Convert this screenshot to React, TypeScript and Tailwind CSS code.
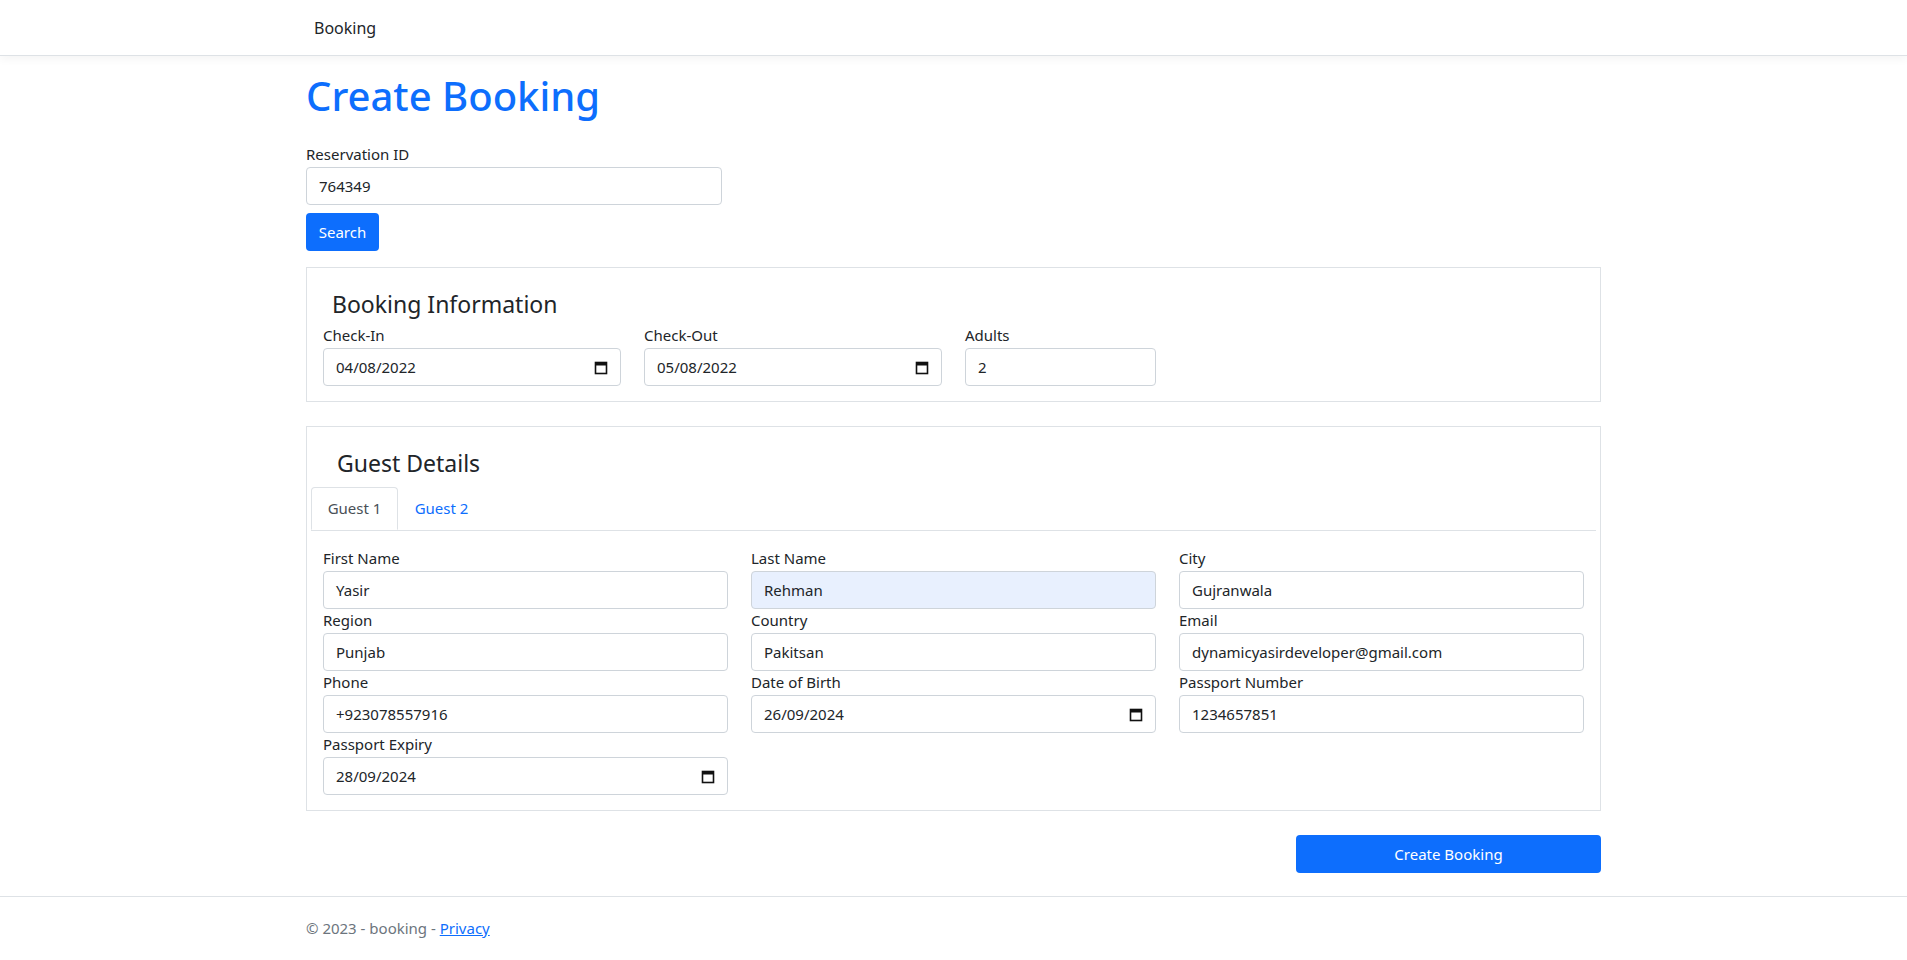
import React from "react";

const font = { fontFamily: '"Noto Sans", "Open Sans", sans-serif' };

function Cal() {
  return (
    <svg width="14" height="15" viewBox="0 0 14 15" className="shrink-0">
      <rect x="1.5" y="2.5" width="11" height="11" fill="none" stroke="#111" strokeWidth="1.6" />
      <rect x="1.5" y="2.5" width="11" height="3" fill="#111" />
    </svg>
  );
}

function Field({ label, value, date, hl, w }: { label: string; value: string; date?: boolean; hl?: boolean; w?: string }) {
  return (
    <div className={w}>
      <div className="text-[15px] text-[#212529] leading-[22px] mb-[2px]">{label}</div>
      <div className={`h-[38px] border border-[#ced4da] rounded-[4px] flex items-center justify-between px-[12px] text-[15px] text-[#212529] ${hl ? "bg-[#e8f0fe]" : "bg-white"}`}>
        <span>{value}</span>
        {date && <Cal />}
      </div>
    </div>
  );
}

export default function App() {
  return (
    <div style={font} className="min-h-[960px] bg-white text-[#212529]">
      <nav className="h-[56px] border-b border-[#dee2e6] shadow-[0_4px_8px_rgba(0,0,0,0.04)] flex items-center">
        <div className="w-[1295px] mx-auto pl-[8px] text-[16px]">Booking</div>
      </nav>
      <main className="w-[1295px] mx-auto">
        <h1 className="text-[40px] font-medium text-[#0d6efd] leading-[48px] mt-[72px-48px] pt-[16px]">Create Booking</h1>
        <div className="mt-[23px] text-[15px] leading-[22px]">Reservation ID</div>
        <div className="w-[416px] h-[38px] mt-[2px] border border-[#ced4da] rounded-[4px] flex items-center px-[12px] text-[15px]">764349</div>
        <button className="mt-[8px] h-[38px] w-[73px] bg-[#0d6efd] text-white text-[15px] rounded-[4px]">Search</button>

        <section className="mt-[16px] border border-[#dee2e6] px-[16px] pb-[15px] pt-[20px]">
          <h4 className="text-[23px] leading-[32px] pl-[9px]">Booking Information</h4>
          <div className="flex gap-[23px] mt-[4px]">
            <Field w="w-[298px]" label="Check-In" value="04/08/2022" date />
            <Field w="w-[298px]" label="Check-Out" value="05/08/2022" date />
            <Field w="w-[191px]" label="Adults" value="2" />
          </div>
        </section>

        <section className="mt-[24px] border border-[#dee2e6] px-[4px] pb-[15px] pt-[20px]">
          <h4 className="text-[23px] leading-[32px] pl-[26px]">Guest Details</h4>
          <div className="flex border-b border-[#dee2e6] mt-[8px] text-[15px]">
            <div className="h-[43px] w-[87px] flex items-center justify-center border border-[#dee2e6] border-b-white -mb-px rounded-t-[4px] text-[#495057]">Guest 1</div>
            <div className="h-[43px] w-[87px] flex items-center justify-center text-[#0d6efd]">Guest 2</div>
          </div>
          <div className="grid grid-cols-[405px_405px_405px] gap-x-[23px] px-[12px] pt-[16px]">
            <Field label="First Name" value="Yasir" />
            <Field label="Last Name" value="Rehman" hl />
            <Field label="City" value="Gujranwala" />
            <Field label="Region" value="Punjab" />
            <Field label="Country" value="Pakitsan" />
            <Field label="Email" value="dynamicyasirdeveloper@gmail.com" />
            <Field label="Phone" value="+923078557916" />
            <Field label="Date of Birth" value="26/09/2024" date />
            <Field label="Passport Number" value="1234657851" />
            <Field label="Passport Expiry" value="28/09/2024" date />
          </div>
        </section>

        <div className="flex justify-end mt-[24px]">
          <button className="h-[38px] w-[305px] bg-[#0d6efd] text-white text-[15px] rounded-[4px]">Create Booking</button>
        </div>
      </main>
      <footer className="mt-[23px] border-t border-[#dee2e6]">
        <div className="w-[1295px] mx-auto py-[20px] text-[15px] text-[#6c757d]">
          © 2023 - booking - <a className="text-[#0d6efd] underline">Privacy</a>
        </div>
      </footer>
    </div>
  );
}
